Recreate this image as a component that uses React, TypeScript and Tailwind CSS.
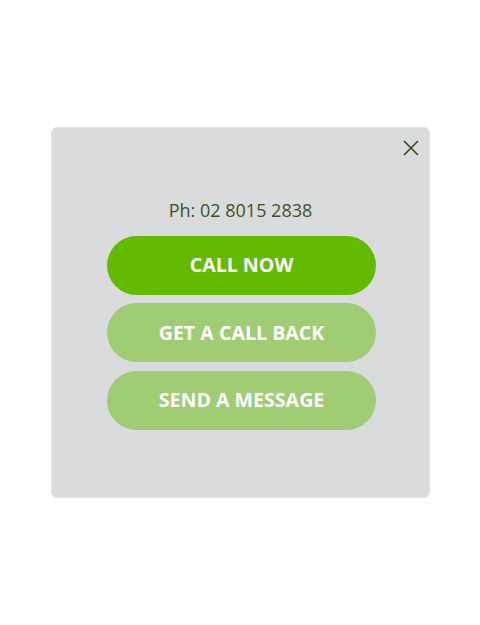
const buttons = [
  { label: "CALL NOW", primary: true },
  { label: "GET A CALL BACK", primary: false },
  { label: "SEND A MESSAGE", primary: false },
];

export default function App() {
  return (
    <div
      className="flex h-[625px] w-[480px] items-center justify-center bg-white"
      style={{ fontFamily: '"Open Sans", "Liberation Sans", sans-serif' }}
    >
      <div className="relative mb-[1px] ml-[1px] flex h-[371px] w-[379px] flex-col items-center rounded-md border border-[#e2e3e4] bg-[#dadbdd] pt-[70.5px]">
        {/* Close */}
        <button className="absolute left-[351px] top-[12px] text-[#2b451c]">
          <svg width="16" height="16" viewBox="0 0 16 16" fill="none" stroke="currentColor" strokeWidth="1.5">
            <path d="M1 1L15 15M15 1L1 15" />
          </svg>
        </button>

        <p className="text-[18px] leading-[24px] text-[#3a5229]">Ph: 02 8015 2838</p>

        <div className="ml-[2px] mt-[13.5px] flex flex-col gap-[8.5px]">
          {buttons.map((b) => (
            <button
              key={b.label}
              className={
                "flex h-[59px] w-[269px] items-center justify-center rounded-full text-[19.6px] font-bold text-white " +
                (b.primary ? "bg-[#62bb00]" : "bg-[#a0cc74]")
              }
            >
              {b.label}
            </button>
          ))}
        </div>
      </div>
    </div>
  );
}
